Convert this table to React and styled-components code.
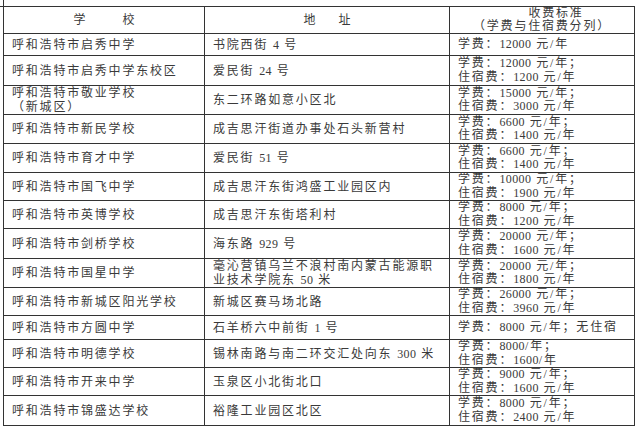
import React from 'react';
import styled, { createGlobalStyle } from 'styled-components';

const GlobalStyle = createGlobalStyle`
  html, body {
    margin: 0;
    padding: 0;
    background: #fff;
    overflow: hidden;
  }
  body {
    font-family: "Liberation Serif", "Noto Sans CJK SC", serif;
    color: #3a3a3a;
  }
`;

// 学校・地址・收费标准
const schools = [
  { h: 22, name: ['呼和浩特市启秀中学'], addr: ['书院西街 4 号'], fee: ['学费：12000 元/年'] },
  { h: 30, name: ['呼和浩特市启秀中学东校区'], addr: ['爱民街 24 号'], fee: ['学费：12000 元/年；', '住宿费：1200 元/年'] },
  { h: 28, name: ['呼和浩特市敬业学校', '（新城区）'], addr: ['东二环路如意小区北'], fee: ['学费：15000 元/年；', '住宿费：3000 元/年'] },
  { h: 29, name: ['呼和浩特市新民学校'], addr: ['成吉思汗街道办事处石头新营村'], fee: ['学费：6600 元/年；', '住宿费：1400 元/年'] },
  { h: 29, name: ['呼和浩特市育才中学'], addr: ['爱民街 51 号'], fee: ['学费：6600 元/年；', '住宿费：1400 元/年'] },
  { h: 28, name: ['呼和浩特市国飞中学'], addr: ['成吉思汗东街鸿盛工业园区内'], fee: ['学费：10000 元/年；', '住宿费：1900 元/年'] },
  { h: 28, name: ['呼和浩特市英博学校'], addr: ['成吉思汗东街塔利村'], fee: ['学费：8000 元/年；', '住宿费：1200 元/年'] },
  { h: 30, name: ['呼和浩特市剑桥学校'], addr: ['海东路 929 号'], fee: ['学费：20000 元/年；', '住宿费：1600 元/年'] },
  { h: 28, name: ['呼和浩特市国星中学'], addr: ['毫沁营镇乌兰不浪村南内蒙古能源职', '业技术学院东 50 米'], fee: ['学费：20000 元/年；', '住宿费：1800 元/年'] },
  { h: 28, name: ['呼和浩特市新城区阳光学校'], addr: ['新城区赛马场北路'], fee: ['学费：26000 元/年；', '住宿费：3960 元/年'] },
  { h: 24, name: ['呼和浩特市方圆中学'], addr: ['石羊桥六中前街 1 号'], fee: ['学费：8000 元/年；无住宿'] },
  { h: 28, name: ['呼和浩特市明德学校'], addr: ['锡林南路与南二环交汇处向东 300 米'], fee: ['学费：8000/年；', '住宿费：1600/年'] },
  { h: 28, name: ['呼和浩特市开来中学'], addr: ['玉泉区小北街北口'], fee: ['学费：9000 元/年；', '住宿费：1600 元/年'] },
  { h: 30, name: ['呼和浩特市锦盛达学校'], addr: ['裕隆工业园区北区'], fee: ['学费：8000 元/年；', '住宿费：2400 元/年'] },
  { h: 30, name: [''], addr: [''], fee: ['学费：10000 元/年；'], top: true },
];

// 数字は欧文フォントで詰めて表示
const withNumbers = (text) =>
  text.split(/(\d+)/).map((part, i) =>
    /^\d+$/.test(part) ? <Num key={i}>{part}</Num> : part
  );

const Lines = ({ lines }) =>
  lines.map((line, i) => (
    <React.Fragment key={i}>
      {i > 0 && <br />}
      {withNumbers(line)}
    </React.Fragment>
  ));

const App = () => {
  return (
    <>
      <GlobalStyle />
      <Page>
        <Table>
          <colgroup>
            <col style={{ width: 201 }} />
            <col style={{ width: 245 }} />
            <col style={{ width: 185 }} />
          </colgroup>
          <thead>
            <Row $h={27}>
              <HeadCell>
                <HeadLabel $gap={37}><span>学</span><span>校</span></HeadLabel>
              </HeadCell>
              <HeadCell>
                <HeadLabel $gap={23}><span>地</span><span>址</span></HeadLabel>
              </HeadCell>
              <HeadCell>
                <FeeTitle>收费标准</FeeTitle>
                <br />
                （学费与住宿费分列）
              </HeadCell>
            </Row>
          </thead>
          <tbody>
            {schools.map((s, i) => (
              <Row key={i} $h={s.h}>
                <Cell $top={s.top}><Lines lines={s.name} /></Cell>
                <Cell $top={s.top}><Lines lines={s.addr} /></Cell>
                <Cell $top={s.top} $tight><Lines lines={s.fee} /></Cell>
              </Row>
            ))}
          </tbody>
        </Table>
      </Page>
    </>
  );
};

export default App;

const Page = styled.div`
  position: relative;
  padding: 6px 0 0 3px;
  height: 420px;
  overflow: hidden;

  &::before {
    content: '';
    position: absolute;
    left: 0;
    top: 0;
    width: 3px;
    height: 6px;
    border-right: 1px solid #333;
    border-bottom: 1px solid #333;
  }
`;

const Table = styled.table`
  width: 631px;
  table-layout: fixed;
  border-collapse: collapse;
  font-size: 12px;
  letter-spacing: 1.8px;
`;

const Row = styled.tr`
  height: ${(props) => props.$h}px;
`;

const Cell = styled.td`
  border: 1px solid #333;
  padding: ${(props) => (props.$top ? '1px' : '0')} 4px 0 8px;
  line-height: ${(props) => (props.$tight ? 13.5 : 14)}px;
  vertical-align: ${(props) => (props.$top ? 'top' : 'middle')};
  white-space: nowrap;
  overflow: hidden;
`;

const HeadCell = styled.th`
  border: 1px solid #333;
  padding: 0;
  font-weight: normal;
  line-height: 13px;
  text-align: center;
  vertical-align: middle;
  white-space: nowrap;
`;

const HeadLabel = styled.span`
  display: inline-flex;
  gap: ${(props) => props.$gap}px;
  letter-spacing: 0;
`;

const FeeTitle = styled.span`
  margin-left: 28px;
`;

const Num = styled.span`
  letter-spacing: 0.4px;
`;
